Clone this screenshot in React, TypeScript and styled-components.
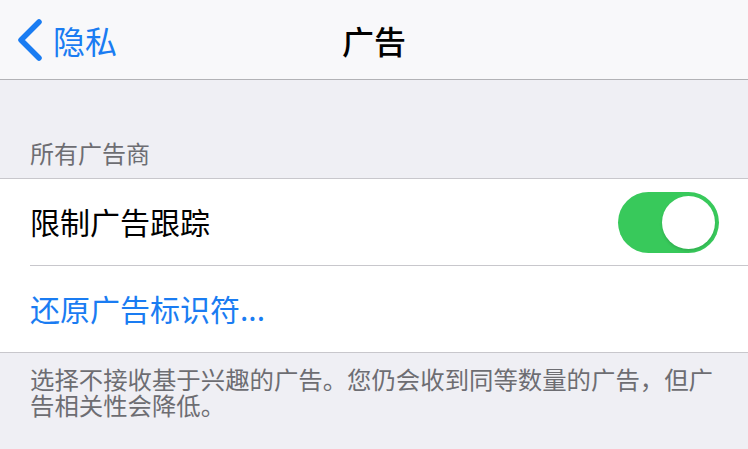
import React from "react";
import styled, { createGlobalStyle } from "styled-components";

const GlobalStyle = createGlobalStyle`
  html, body {
    margin: 0;
    padding: 0;
    background: #efeff4;
  }
  body {
    font-family: "Noto Sans CJK SC", "Noto Sans", sans-serif;
    -webkit-font-smoothing: antialiased;
  }
`;

const Page = styled.div`
  width: 748px;
  height: 449px;
  overflow: hidden;
  background: #efeff4;
`;

const NavBar = styled.div`
  height: 79px;
  border-bottom: 1px solid #b2b2b6;
  background: #f8f8fa;
  display: grid;
  grid-template-columns: 1fr auto 1fr;
  align-items: center;
`;

const BackButton = styled.div`
  display: flex;
  align-items: center;
  gap: 10px;
  padding-left: 17px;
  color: #1a7cf2;
  font-size: 32px;
  line-height: 1;
`;

const Title = styled.div`
  font-size: 32px;
  font-weight: 500;
  color: #000;
  line-height: 1;
`;

const SectionHeader = styled.div`
  height: 98px;
  box-sizing: border-box;
  display: flex;
  align-items: flex-end;
  padding: 0 30px 13px;
  font-size: 24px;
  line-height: 24px;
  color: #6d6d72;
`;

const Group = styled.div`
  background: #fff;
  border-top: 1px solid #c8c7cc;
  border-bottom: 1px solid #c8c7cc;
`;

const Row = styled.div`
  padding-left: 30px;
  &:not(:last-child) > div {
    border-bottom: 1px solid #c8c7cc;
  }
`;

const RowInner = styled.div`
  height: 86px;
  display: flex;
  align-items: center;
  justify-content: space-between;
  padding-right: 29px;
`;

const RowLabel = styled.span<{ $action?: boolean }>`
  font-size: 30px;
  line-height: 1;
  padding-bottom: 3px;
  color: ${(p) => (p.$action ? "#1a7cf2" : "#000")};
`;

const Toggle = styled.div<{ $on: boolean }>`
  width: 101px;
  height: 61px;
  border-radius: 31px;
  background: ${(p) => (p.$on ? "#38c95b" : "#e9e9ea")};
  display: flex;
  align-items: center;
  justify-content: ${(p) => (p.$on ? "flex-end" : "flex-start")};
  padding: 0 4px;
  box-sizing: border-box;
`;

const Knob = styled.div`
  width: 53px;
  height: 53px;
  border-radius: 50%;
  background: #fff;
  box-shadow: 0 2px 3px rgba(0, 0, 0, 0.12);
`;

const Footer = styled.div`
  padding: 13px 20px 0 30px;
  font-size: 24.4px;
  line-height: 26px;
  color: #6d6d72;
`;

const Chevron = () => (
  <svg width="26" height="42" viewBox="0 0 26 42" fill="none">
    <path
      d="M22 3 L4 21 L22 39"
      stroke="#1a7cf2"
      strokeWidth="5.5"
      strokeLinecap="round"
      strokeLinejoin="round"
    />
  </svg>
);

const App = () => {
  return (
    <Page>
      <GlobalStyle />
      <NavBar>
        <BackButton>
          <Chevron />
          <span>隐私</span>
        </BackButton>
        <Title>广告</Title>
        <div />
      </NavBar>
      <SectionHeader>所有广告商</SectionHeader>
      <Group>
        <Row>
          <RowInner>
            <RowLabel>限制广告跟踪</RowLabel>
            <Toggle $on>
              <Knob />
            </Toggle>
          </RowInner>
        </Row>
        <Row>
          <RowInner>
            <RowLabel $action>还原广告标识符...</RowLabel>
          </RowInner>
        </Row>
      </Group>
      <Footer>
        选择不接收基于兴趣的广告。您仍会收到同等数量的广告，但广告相关性会降低。
      </Footer>
    </Page>
  );
};

export default App;
